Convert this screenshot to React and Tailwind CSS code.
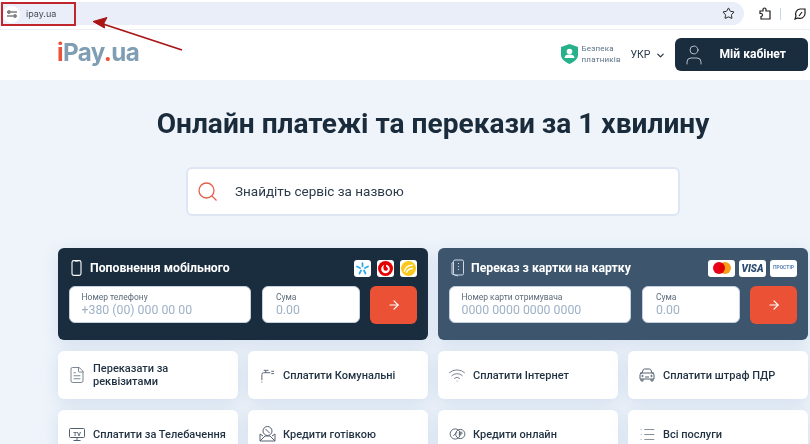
import React from "react";
import { ChevronDown, ArrowRight, Star, User, FileText, Wifi, List } from "lucide-react";

const Field = ({ label, value, className }) => (
  <div className={`h-[37px] bg-white rounded-md border-[1.5px] border-[#c3d0df] flex flex-col justify-center ${className}`}>
    <div className="text-[8.5px] leading-[11px] text-[#5d6b7a]">{label}</div>
    <div className="text-[12.3px] leading-[15px] text-[#9fb2c6]">{value}</div>
  </div>
);

const PayCard = ({ bg, title, icon, logos, label, placeholder, iconBox }) => (
  <div className={`w-[370px] h-[92px] rounded-md ${bg} px-[11px] pt-[10px] shadow-[0_4px_16px_rgba(150,180,215,0.3)]`}>
    <div className="flex items-center h-[20px]">
      <div className={`${iconBox} flex justify-center`}>{icon}</div>
      <div className="text-white font-bold text-[12.25px]">{title}</div>
      <div className="ml-auto flex gap-[6px]">{logos}</div>
    </div>
    <div className="flex mt-[8px]">
      <Field label={label} value={placeholder} className="w-[183px] pl-[11.5px]" />
      <Field label="Сума" value="0.00" className="w-[98px] ml-[11px] pl-[12.5px]" />
      <button className="w-[47px] h-[38px] ml-[10px] bg-[#eb5135] rounded-md flex items-center justify-center text-white">
        <ArrowRight size={14} />
      </button>
    </div>
  </div>
);

const Tile = ({ icon, text }) => (
  <div className="w-[180px] h-[48px] bg-white rounded-md shadow-[0_3px_16px_rgba(150,180,215,0.35)] flex items-center">
    <div className="w-[35px] flex justify-center pl-[3px] shrink-0 text-[#53606e]">{icon}</div>
    <div className="text-[11px] leading-[13px] font-medium text-[#1f3041]">{text}</div>
  </div>
);

const Tap = () => (
  <svg width="15" height="15" viewBox="0 0 16 16" fill="none" stroke="currentColor" strokeWidth="1">
    <path d="M2 13V7q0-2 2-2h7M6 3v2M4 2.500h5M12 3.500h3M12 6h3M1.500 15h1" />
  </svg>
);

const Loan = () => (
  <svg width="17" height="18" viewBox="0 0 17 18" fill="none" stroke="currentColor" strokeWidth="1">
    <circle cx="8.500" cy="6" r="4.500" />
    <path d="M6.500 4l4 4M1 9v7h15V9M1 16l5-5h5l5 5M1 9l3 2M16 9l-3 2" />
  </svg>
);

const Coins = () => (
  <svg width="17" height="12" viewBox="0 0 18 13" fill="none" stroke="currentColor" strokeWidth="1">
    <circle cx="6.500" cy="6.500" r="5.500" />
    <circle cx="12" cy="6.500" r="5" />
    <path d="M4.500 8.500l4-4M11 4.500v4M11 4.500h2a1 1 0 010 2h-2" />
  </svg>
);

const CarFront = () => (
  <svg width="16" height="14" viewBox="0 0 16 14" fill="none" stroke="currentColor" strokeWidth="1">
    <path d="M3 5l1.200-3.200Q4.500 1 5.500 1h5q1 0 1.300.8L13 5M1 7q0-2 2-2h10q2 0 2 2v4H1zM2 11v2h2v-2M12 11v2h2v-2M1 5h2M13 5h2M6 9h4" />
    <circle cx="3.500" cy="8" r=".7" />
    <circle cx="12.500" cy="8" r=".7" />
  </svg>
);

const TvIcon = () => (
  <svg width="16" height="13" viewBox="0 0 16 13" fill="none" stroke="currentColor" strokeWidth="1">
    <rect x=".5" y=".5" width="15" height="9" rx="1" />
    <path d="M8 10v2M4.500 12.500h7" />
    <text x="8" y="7.500" textAnchor="middle" fontSize="6" fontWeight="700" fill="currentColor" stroke="none">TV</text>
  </svg>
);

const Phone = () => (
  <svg width="11" height="16" viewBox="0 0 11 16" fill="none" stroke="#fff" strokeWidth="1.100">
    <rect x="1" y=".6" width="9" height="14.800" rx="1.800" />
    <path d="M4 1h3" />
  </svg>
);

const CardsIcon = () => (
  <svg width="14" height="18" viewBox="0 0 14 18" fill="none" stroke="#cfd8e2" strokeWidth="1">
    <rect x="2.500" y="1" width="10" height="15" rx="1.500" />
    <path d="M2.500 3L1 4v11l6 2M7.500 4v1M7.500 7v1M7.500 10v1" />
  </svg>
);

const Logo = ({ w, children }) => (
  <div className={`${w} h-[17px] bg-white rounded-[3px] flex items-center justify-center overflow-hidden`}>{children}</div>
);

export default function App() {
  return (
    <div className="relative w-[810px] h-[444px] overflow-hidden bg-[#eff4fa] font-['Roboto',sans-serif] text-[#1a2b3c]">
      {/* browser bar */}
      <div className="h-[30px] bg-white border-b border-[#eef0f3] flex items-center">
        <div className="w-[744px] h-[23px] mt-[-2px] bg-[#e9eef8] rounded-r-full flex items-center justify-end pr-[9px]">
          <Star size={13} strokeWidth={1.8} className="text-[#1f1f1f]" />
        </div>
        <svg width="14" height="14" viewBox="0 0 14 14" fill="none" stroke="#1f1f1f" strokeWidth="1.200" className="ml-[14px] mt-[-2px]">
          <path d="M2 4h3V2.500a1.500 1.500 0 013 0V4h4v8H3V9.500a1.500 1.500 0 000-3H2z" />
        </svg>
        <div className="w-px h-[12px] bg-[#c8d8ea] ml-[8px] mt-[-2px]" />
        <svg width="14" height="14" viewBox="0 0 14 14" fill="none" stroke="#1f1f1f" strokeWidth="1.200" className="ml-[12px] mt-[-2px]">
          <path d="M12 2H7a5 5 0 00-4 7L2 12l3-1a5 5 0 007-4zM6 9l3-4" />
        </svg>
      </div>

      {/* annotated url */}
      <div className="absolute left-[1px] top-[2px] w-[75px] h-[24px] border-2 border-[#c0272d] flex items-center">
        <div className="w-[17px] h-[17px] bg-white rounded-full flex items-center justify-center">
          <svg width="10" height="10" viewBox="0 0 10 10" fill="none" stroke="#3c4043" strokeWidth="1.100">
            <path d="M4 3h6M0 7h6" />
            <circle cx="2" cy="3" r="1.200" />
            <circle cx="8" cy="7" r="1.200" />
          </svg>
        </div>
        <span className="ml-[6px] text-[9px] text-[#444b53] font-['Inter',sans-serif]">ipay.ua</span>
      </div>
      <svg className="absolute left-[90px] top-[15px]" width="96" height="38" viewBox="0 0 96 38">
        <path d="M92 35L10 8" stroke="#a91414" strokeWidth="1.800" />
        <path d="M3 6.500l14-4-3 5.500 .5 5z" fill="#a91414" stroke="#a91414" strokeWidth="1" />
      </svg>

      {/* site header */}
      <div className="h-[50px] bg-white flex items-center">
        <div className="ml-[57px] mt-[-4px] text-[24.200px] font-bold font-['Inter',sans-serif] tracking-[-0.6px] text-[#7f9db3]">
          <span className="text-[#e8533a]">i</span>Pay<span className="text-[#e8533a]">.</span>ua
        </div>
        <svg width="17" height="20" viewBox="0 0 17 20" className="ml-auto mt-[-2px]">
          <path d="M8.500 0L17 3v8c0 4-4 7-8.500 9C4 18 0 15 0 11V3z" fill="#26b18b" />
          <circle cx="8.500" cy="7.500" r="2.800" fill="#fff" />
          <path d="M3.500 14c0-2.500 2-3.500 5-3.500s5 1 5 3.500z" fill="#fff" />
        </svg>
        <div className="ml-[4px] text-[8px] leading-[11px] text-[#5b7186] tracking-[0.2px] w-[40px] mt-[-2px]">
          Безпека платників
        </div>
        <div className="ml-[9px] text-[10.500px] text-[#2b3b4b] mt-[-1px]">УКР</div>
        <ChevronDown size={11} strokeWidth={2.600} className="ml-[4.500px] text-[#24313e]" />
        <div className="ml-[9px] mr-[2px] mt-[-1px] w-[133px] h-[33px] rounded-md bg-[#1a2d3f] flex items-center text-white">
          <User size={24} strokeWidth={0.800} className="ml-[7px] text-[#d8e0e8]" />
          <span className="ml-[13.500px] text-[12.100px] font-bold">Мій кабінет</span>
        </div>
      </div>

      {/* hero */}
      <h1 className="mt-[28px] pl-[56px] text-center text-[28.100px] leading-[32px] font-bold text-[#1a2b3c]">
        Онлайн платежі та перекази за 1 хвилину
      </h1>
      <div className="mt-[27px] ml-[186px] w-[494px] h-[49px] bg-white rounded-md border-2 border-[#dde6f2] flex items-center">
        <svg width="20" height="20" viewBox="0 0 20 20" fill="none" stroke="#e2604a" strokeWidth="1.300" className="ml-[10px]">
          <circle cx="8.500" cy="8.500" r="7.500" />
          <path d="M14 14l4.500 4.500" />
        </svg>
        <span className="ml-[17px] text-[13.500px] text-[#2b3b4b]">Знайдіть сервіс за назвою</span>
      </div>

      {/* payment cards */}
      <div className="mt-[32px] ml-[58px] flex gap-[10px]">
        <PayCard
          bg="bg-[#1a2d3f]"
          title="Поповнення мобільного"
          iconBox="w-[15px] mr-[6px]"
          icon={<Phone />}
          label="Номер телефону"
          placeholder="+380 (00) 000 00 00"
          logos={
            <>
              <Logo w="w-[17px]">
                <svg width="13" height="13" viewBox="0 0 13 13" stroke="#29a9e8" strokeWidth="1.700" strokeLinecap="round">
                  <path d="M6.500 1v3.500M1 4.500l3 1.500M12 4.500L9 6M3.500 11.500l1.500-3M9.500 11.500L8 8.500" />
                </svg>
              </Logo>
              <Logo w="w-[17px]">
                <svg width="15" height="15" viewBox="0 0 15 15">
                  <circle cx="7.500" cy="7.500" r="7.500" fill="#e60000" />
                  <circle cx="7.500" cy="8" r="4.300" fill="#fff" />
                  <path d="M8 2.500C5.500 3.500 5 6 5.500 8c.5 2 3.500 2.500 4.300.5C10.500 6.500 8 6.500 8 4.500z" fill="#e60000" />
                </svg>
              </Logo>
              <Logo w="w-[17px]">
                <div className="w-[15px] h-[15px] rounded-full bg-[#fbc91e] flex items-center justify-center">
                  <svg width="11" height="11" viewBox="0 0 10 10" fill="none" stroke="#fff" strokeWidth="1.200">
                    <path d="M1 8c1-4 4-6 8-6M3 9c1-3 3-4 6-4" />
                  </svg>
                </div>
              </Logo>
            </>
          }
        />
        <PayCard
          bg="bg-[#3d566e]"
          title="Переказ з картки на картку"
          iconBox="w-[18px] mr-[4px]"
          icon={<CardsIcon />}
          label="Номер карти отримувача"
          placeholder="0000 0000 0000 0000"
          logos={
            <div className="flex gap-[4px]">
              <Logo w="w-[27px]">
                <div className="w-[12px] h-[12px] rounded-full bg-[#eb001b]" />
                <div className="w-[12px] h-[12px] rounded-full bg-[#f79e1b] ml-[-6px] mix-blend-multiply" />
              </Logo>
              <Logo w="w-[27px]">
                <span className="text-[10px] font-black italic text-[#2b4a6f]">VISA</span>
              </Logo>
              <Logo w="w-[27px]">
                <span className="text-[5px] font-bold text-[#5e85b8]">ПРОСТІР</span>
              </Logo>
            </div>
          }
        />
      </div>

      {/* service tiles */}
      <div className="mt-[11px] ml-[58px] flex gap-[10px]">
        <Tile icon={<FileText size={18} strokeWidth={1} />} text={<span className="block w-[90px]">Переказати за реквізитами</span>} />
        <Tile icon={<Tap />} text="Сплатити Комунальні" />
        <Tile icon={<Wifi size={18} strokeWidth={1} />} text="Сплатити Інтернет" />
        <Tile icon={<CarFront />} text="Сплатити штраф ПДР" />
      </div>
      <div className="mt-[11px] ml-[58px] flex gap-[10px]">
        <Tile icon={<TvIcon />} text="Сплатити за Телебачення" />
        <Tile icon={<Loan />} text="Кредити готівкою" />
        <Tile icon={<Coins />} text="Кредити онлайн" />
        <Tile icon={<List size={17} strokeWidth={1} />} text="Всі послуги" />
      </div>
    </div>
  );
}
